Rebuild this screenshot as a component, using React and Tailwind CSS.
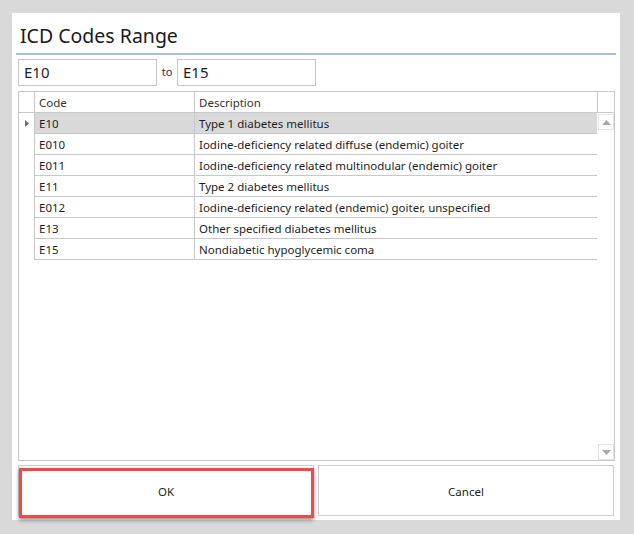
import React from "react";

const rows = [
  ["E10", "Type 1 diabetes mellitus"],
  ["E010", "Iodine-deficiency related diffuse (endemic) goiter"],
  ["E011", "Iodine-deficiency related multinodular (endemic) goiter"],
  ["E11", "Type 2 diabetes mellitus"],
  ["E012", "Iodine-deficiency related (endemic) goiter, unspecified"],
  ["E13", "Other specified diabetes mellitus"],
  ["E15", "Nondiabetic hypoglycemic coma"],
];

function Tri({ up }) {
  return (
    <svg width="9" height="5" viewBox="0 0 9 5">
      {up ? (
        <polygon points="0,5 9,5 4.5,0" fill="#a8a8a8" />
      ) : (
        <polygon points="0,0 9,0 4.5,5" fill="#a8a8a8" />
      )}
    </svg>
  );
}

export default function App() {
  return (
    <div
      className="w-[634px] h-[534px] bg-[#d9d9d9] pt-[13px] pl-[12px] text-[#1e1e1e]"
      style={{ fontFamily: '"Noto Sans", "Open Sans", sans-serif' }}
    >
      <div className="w-[608px] h-[507px] bg-white flex flex-col">
        <div className="h-[40px] pl-[8px] pt-[10px] text-[19.5px] leading-[26px] text-[#1a1a1a]">
          ICD Codes Range
        </div>
        <div className="mx-[4px] h-[2px] bg-[#a9bfdb]" />
        <div className="flex items-center mt-[4px] ml-[6px] h-[27px]">
          <div className="w-[139px] h-[27px] border border-[#c6c6c6] px-[5px] text-[15px] leading-[25px]">
            E10
          </div>
          <div className="w-[20px] text-center text-[11px] text-[#333]">to</div>
          <div className="w-[139px] h-[27px] border border-[#c6c6c6] px-[5px] text-[15px] leading-[25px]">
            E15
          </div>
        </div>
        <div className="mt-[5px] ml-[6px] w-[597px] h-[370px] border border-[#c8c8c8] flex flex-col text-[11.5px]">
          <div className="flex h-[21px] border-b border-[#c8c8c8] shrink-0">
            <div className="w-[16px] border-r border-[#c8c8c8]" />
            <div className="w-[160px] border-r border-[#c8c8c8] pl-[4px] leading-[21px] text-[#333]">
              Code
            </div>
            <div className="w-[403px] border-r border-[#c8c8c8] pl-[4px] leading-[21px] text-[#333]">
              Description
            </div>
            <div className="flex-1" />
          </div>
          <div className="flex flex-1">
            <div className="w-[579px] flex flex-col">
              {rows.map(([code, desc], i) => (
                <div key={code} className="flex h-[21px]">
                  <div className="w-[15px] flex items-center justify-center">
                    {i === 0 && (
                      <svg width="4" height="7" viewBox="0 0 4 7">
                        <polygon points="0,0 4,3.5 0,7" fill="#707070" />
                      </svg>
                    )}
                  </div>
                  <div
                    className={`w-[160px] border-l border-b border-[#c8c8c8] pl-[4px] leading-[21px] ${
                      i === 0 ? "bg-[#d9d9d9]" : ""
                    }`}
                  >
                    {code}
                  </div>
                  <div
                    className={`w-[403px] border-l border-b border-[#c8c8c8] pl-[4px] leading-[21px] whitespace-nowrap ${
                      i === 0 ? "bg-[#d9d9d9]" : ""
                    }`}
                  >
                    {desc}
                  </div>
                </div>
              ))}
            </div>
            <div className="flex-1 flex flex-col justify-between items-start pt-[1px] pb-[0px]">
              <div className="w-[16px] h-[16px] border border-[#e4e4e4] flex items-center justify-center">
                <Tri up />
              </div>
              <div className="w-[16px] h-[16px] border border-[#e4e4e4] flex items-center justify-center">
                <Tri />
              </div>
            </div>
          </div>
        </div>
        <div className="flex gap-[4px] mt-[4px] ml-[6px] text-[11.5px]">
          <div className="relative w-[296px] h-[51px]">
            <button className="w-full h-full border border-[#cfcfcf] bg-white pt-[2px]">
              OK
            </button>
            <div className="absolute left-[1px] top-[3px] right-[0px] bottom-[-2px] border-[3px] border-[#f24848] shadow-[0_2px_4px_rgba(0,0,0,0.45)] pointer-events-none" />
          </div>
          <button className="w-[296px] h-[51px] border border-[#cfcfcf] bg-white pt-[2px]">
            Cancel
          </button>
        </div>
      </div>
    </div>
  );
}
